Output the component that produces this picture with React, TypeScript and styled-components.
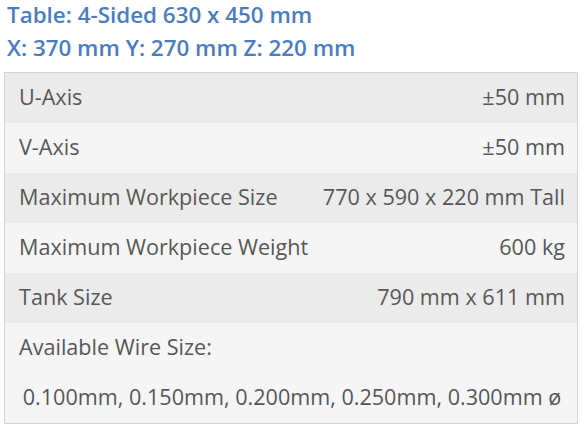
import React from 'react';
import styled, { createGlobalStyle } from 'styled-components';

const GlobalStyle = createGlobalStyle`
  html, body {
    margin: 0;
    padding: 0;
    background: #ffffff;
  }
  body {
    font-family: "Open Sans", "Liberation Sans", sans-serif;
  }
`;

const Page = styled.div`
  width: 583px;
  height: 428px;
  padding: 0 5px 0 4px;
  box-sizing: border-box;
`;

const Heading = styled.div`
  color: #4a7dc0;
  font-weight: 600;
  font-size: 22.4px;
  line-height: 33px;
  padding-left: 3px;
  white-space: nowrap;
`;

const Headings = styled.div`
  margin-top: -2px;
  margin-bottom: 8px;
`;

const SpecTable = styled.div`
  border: 1px solid #d2d2d2;
  display: flex;
  flex-direction: column;
`;

const Row = styled.div<{ $shade: 'dark' | 'light'; $center?: boolean }>`
  height: 50px;
  box-sizing: border-box;
  display: flex;
  align-items: center;
  justify-content: ${p => (p.$center ? 'center' : 'space-between')};
  padding: 0 12px 3px 14px;
  background: ${p => (p.$shade === 'dark' ? '#ebebeb' : '#f5f5f5')};
  color: #575757;
  font-size: 21.6px;
  white-space: nowrap;
`;

const Label = styled.span``;
const Value = styled.span`
  text-align: right;
`;

const specs: Array<[string, string]> = [
  ['U-Axis', '±50 mm'],
  ['V-Axis', '±50 mm'],
  ['Maximum Workpiece Size', '770 x 590 x 220 mm Tall'],
  ['Maximum Workpiece Weight', '600 kg'],
  ['Tank Size', '790 mm x 611 mm'],
];

const App: React.FC = () => {
  return (
    <Page>
      <GlobalStyle />
      <Headings>
        <Heading>Table: 4-Sided 630 x 450 mm</Heading>
        <Heading>X: 370 mm Y: 270 mm Z: 220 mm</Heading>
      </Headings>
      <SpecTable>
        {specs.map(([label, value], i) => (
          <Row key={label} $shade={i % 2 === 0 ? 'dark' : 'light'}>
            <Label>{label}</Label>
            <Value>{value}</Value>
          </Row>
        ))}
        <Row $shade="light">
          <Label>Available Wire Size:</Label>
        </Row>
        <Row $shade="light" $center>
          <Label>0.100mm, 0.150mm, 0.200mm, 0.250mm, 0.300mm ø</Label>
        </Row>
      </SpecTable>
    </Page>
  );
};

export default App;
